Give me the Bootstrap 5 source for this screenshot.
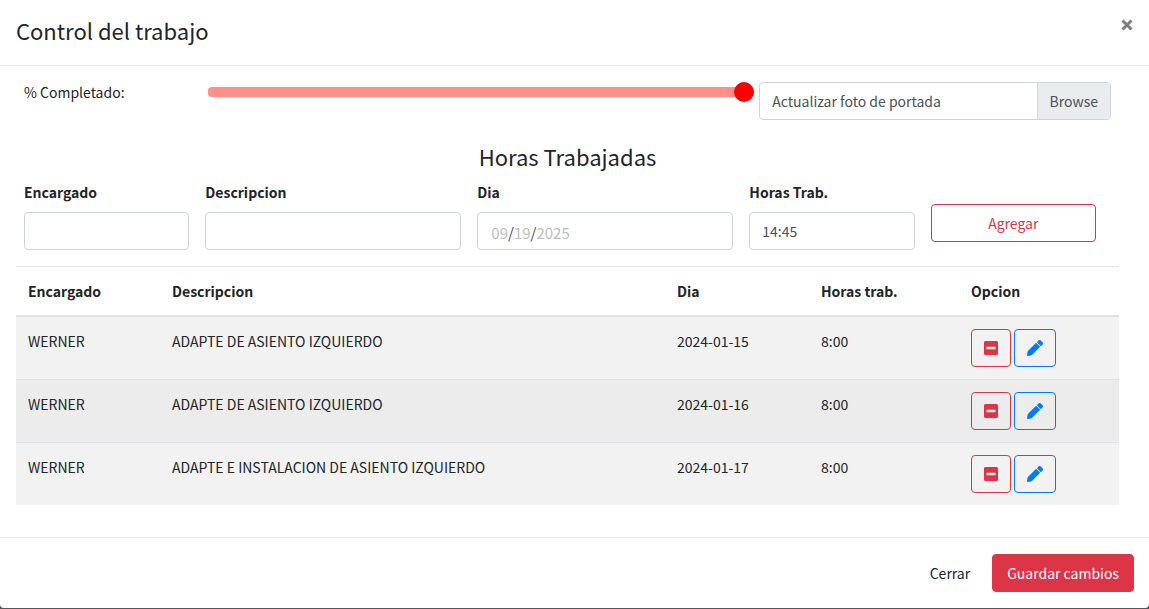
<!DOCTYPE html>
<html lang="es">
<head>
<meta charset="utf-8">
<meta name="viewport" content="width=device-width, initial-scale=1">
<title>Control del trabajo</title>
<link href="https://cdn.jsdelivr.net/npm/bootstrap@5.3.0/dist/css/bootstrap.min.css" rel="stylesheet">
<style>
  body {
    font-family: "Noto Sans CJK SC", "Source Sans Pro", sans-serif;
    font-size: 14px;
    line-height: 24px;
    color: #212529;
    background: #55565a;
  }
  .work-dialog { background: #fff; border-radius: 0 0 4px 4px; }
  .work-header { border-bottom: 1px solid #e9ecef; padding: 16px 16px 21px; }
  .work-footer { border-top: 1px solid #e9ecef; padding: 16px 15px; }
  .work-title { font-size: 22px; line-height: 28px; font-weight: 400; }
  .section-title { font-size: 22px; line-height: 24px; margin-bottom: 12px; font-weight: 400; }
  .close-btn { color: #7f7f7f; line-height: 0; padding: 3px 0; }
  .work-body { padding: 16px 30px 16px 16px; }
  .row { --bs-gutter-x: 16px; }
  .hours-form { margin-right: 15px; }
  .hours-form label { font-weight: 700; }
  .progress-label { line-height: 20px; }

  .btn, .form-control { font-size: 14px; line-height: 24px; height: 38px; border-radius: 4px; }
  .form-control { border-color: #ced4da; color: #495057; }
  .btn-outline-danger { --bs-btn-color: #dc3545; }
  .btn-outline-primary {
    --bs-btn-color: #007bff; --bs-btn-border-color: #007bff;
    --bs-btn-hover-bg: #007bff; --bs-btn-hover-border-color: #007bff;
  }
  .work-footer .btn { padding-left: 14px; padding-right: 14px; }

  .progress-range {
    appearance: none; display: block; height: 20px; margin: 0;
    width: calc(100% + 3px); background: transparent;
  }
  .progress-range::-webkit-slider-runnable-track { height: 10px; border-radius: 4px; background: #ff8f88; }
  .progress-range::-webkit-slider-thumb {
    appearance: none; width: 20px; height: 20px; margin-top: -5px;
    border-radius: 50%; background: #f00;
  }

  .file-picker { border: 1px solid #ced4da; border-radius: 4px; color: #495057; height: 38px; line-height: 24px; overflow: hidden; }
  .file-picker span { padding: 6px 12px; }
  .file-browse { background: #e9ecef; border-left: 1px solid #ced4da; }

  .date-input { font-size: 15px; }
  .date-input::-webkit-calendar-picker-indicator { display: none; }
  .date-input::-webkit-datetime-edit { padding: 3px 0 0 1px; }
  .date-input::-webkit-datetime-edit-month-field,
  .date-input::-webkit-datetime-edit-day-field,
  .date-input::-webkit-datetime-edit-year-field { color: #bdbdbd; }

  .hours-table { table-layout: fixed; --bs-table-color: #212529; border-color: #dee2e6; }
  .hours-table > :not(caption) > * > * { padding: 12px; border-width: 1px 0 0; box-shadow: none; }
  .hours-table thead th { border-bottom-width: 2px; }
  .hours-table tbody td { background: #f2f2f2; }
  .hours-table tbody tr:nth-child(2) td { background: #ececec; }
  .hours-table .btn { display: flex; align-items: center; padding: 0 12px; }
  .option-buttons { display: flex; gap: 3px; }
  .col-name, .col-day { width: 144px; }
  .col-hours { width: 150px; }
  .col-option { width: 160px; }
</style>
</head>
<body>
<svg class="d-none" aria-hidden="true">
  <symbol id="minus-square" viewBox="0 0 448 512"><path fill="currentColor" d="M400 32H48C21.500 32 0 53.500 0 80v352c0 26.500 21.500 48 48 48h352c26.500 0 48-21.500 48-48V80c0-26.500-21.500-48-48-48zM92 296c-6.600 0-12-5.400-12-12v-56c0-6.600 5.400-12 12-12h264c6.600 0 12 5.400 12 12v56c0 6.600-5.400 12-12 12H92z"/></symbol>
  <symbol id="pencil" viewBox="0 0 512 512"><path fill="currentColor" d="M497.900 142.100l-46.100 46.100c-4.700 4.700-12.300 4.700-17 0l-111-111c-4.700-4.700-4.700-12.300 0-17l46.100-46.100c18.700-18.700 49.100-18.700 67.900 0l60.100 60.100c18.800 18.700 18.800 49.100 0 67.900zM284.200 99.800L21.600 362.400.4 483.900c-2.900 16.400 11.400 30.600 27.800 27.800l121.500-21.300 262.600-262.600c4.700-4.700 4.700-12.300 0-17l-111-111c-4.800-4.700-12.400-4.700-17.100 0z"/></symbol>
</svg>

<div class="work-dialog">
  <header class="work-header d-flex align-items-start justify-content-between">
    <h4 class="work-title m-0">Control del trabajo</h4>
    <button type="button" class="close-btn border-0 bg-transparent" aria-label="Cerrar ventana">
      <svg width="12" height="12" viewBox="0 0 12 12"><path d="M1.500 1.500l9 9M10.500 1.500l-9 9" stroke="currentColor" stroke-width="3"/></svg>
    </button>
  </header>

  <main class="work-body">
    <div class="row mx-0 mb-4">
      <div class="col-2"><label class="progress-label d-block" for="completado">% Completado:</label></div>
      <div class="col-6 pe-0"><input class="progress-range" type="range" id="completado" min="0" max="100" value="100"></div>
      <div class="col-4">
        <input type="file" class="visually-hidden" id="portada">
        <label class="file-picker d-flex justify-content-between" for="portada">
          <span>Actualizar foto de portada</span><span class="file-browse">Browse</span>
        </label>
      </div>
    </div>

    <h4 class="section-title text-center">Horas Trabajadas</h4>

    <form class="hours-form mb-3">
      <div class="row mx-0">
        <div class="col-2"><label class="d-block mb-2" for="encargado">Encargado</label><input class="form-control" type="text" id="encargado"></div>
        <div class="col-3"><label class="d-block mb-2" for="descripcion">Descripcion</label><input class="form-control" type="text" id="descripcion"></div>
        <div class="col-3"><label class="d-block mb-2" for="dia">Dia</label><input class="form-control date-input" type="date" id="dia" value="2025-09-19"></div>
        <div class="col-2"><label class="d-block mb-2" for="horas">Horas Trab.</label><input class="form-control" type="text" id="horas" value="14:45"></div>
        <div class="col-2 pt-4"><button type="button" class="btn btn-outline-danger w-100">Agregar</button></div>
      </div>
    </form>

    <table class="table hours-table mb-3">
      <colgroup><col class="col-name"><col><col class="col-day"><col class="col-hours"><col class="col-option"></colgroup>
      <thead><tr><th>Encargado</th><th>Descripcion</th><th>Dia</th><th>Horas trab.</th><th>Opcion</th></tr></thead>
      <tbody>
        <tr><td>WERNER</td><td>ADAPTE DE ASIENTO IZQUIERDO</td><td>2024-01-15</td><td>8:00</td>
          <td><div class="option-buttons"><button type="button" class="btn btn-outline-danger" aria-label="Eliminar"><svg width="14" height="16"><use href="#minus-square"/></svg></button><button type="button" class="btn btn-outline-primary" aria-label="Editar"><svg width="16" height="16"><use href="#pencil"/></svg></button></div></td></tr>
        <tr><td>WERNER</td><td>ADAPTE DE ASIENTO IZQUIERDO</td><td>2024-01-16</td><td>8:00</td>
          <td><div class="option-buttons"><button type="button" class="btn btn-outline-danger" aria-label="Eliminar"><svg width="14" height="16"><use href="#minus-square"/></svg></button><button type="button" class="btn btn-outline-primary" aria-label="Editar"><svg width="16" height="16"><use href="#pencil"/></svg></button></div></td></tr>
        <tr><td>WERNER</td><td>ADAPTE E INSTALACION DE ASIENTO IZQUIERDO</td><td>2024-01-17</td><td>8:00</td>
          <td><div class="option-buttons"><button type="button" class="btn btn-outline-danger" aria-label="Eliminar"><svg width="14" height="16"><use href="#minus-square"/></svg></button><button type="button" class="btn btn-outline-primary" aria-label="Editar"><svg width="16" height="16"><use href="#pencil"/></svg></button></div></td></tr>
      </tbody>
    </table>
  </main>

  <footer class="work-footer d-flex justify-content-end gap-2">
    <button type="button" class="btn border-0">Cerrar</button>
    <button type="button" class="btn btn-danger">Guardar cambios</button>
  </footer>
</div>
<script src="https://cdn.jsdelivr.net/npm/bootstrap@5.3.0/dist/js/bootstrap.bundle.min.js"></script>
</body>
</html>
